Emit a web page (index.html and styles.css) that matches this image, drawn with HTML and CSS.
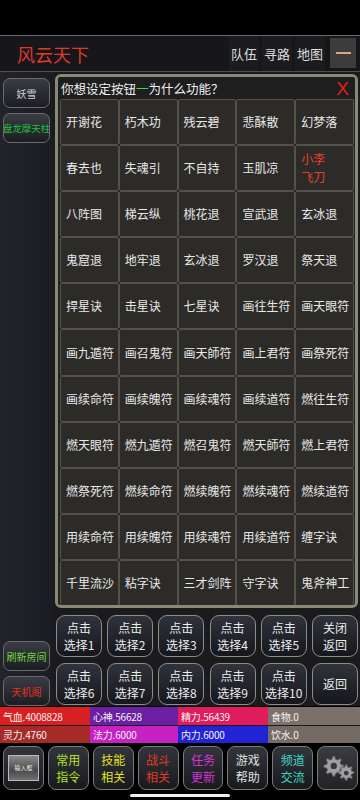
FILE: index.html
```html
<!DOCTYPE html>
<html lang="zh">
<head>
<meta charset="utf-8">
<link rel="stylesheet" href="styles.css">
</head>
<body>
<div class="phone">
  <div class="statusbar"></div>
  <header class="topbar">
    <div class="title">风云天下</div>
    <div class="top-actions">
      <span class="top-btn">队伍</span>
      <span class="top-btn">寻路</span>
      <span class="top-btn">地图</span>
      <span class="menu-btn"><span class="dash"></span></span>
    </div>
  </header>
  <div class="main">
    <aside class="side">
      <div class="side-group">
        <div class="side-btn">妖雪</div>
        <div class="side-btn green small">盘龙摩天柱</div>
      </div>
      <div class="side-group">
        <div class="side-btn lime">刷新房间</div>
        <div class="side-btn red">天机阁</div>
      </div>
    </aside>
    <section class="content">
      <div class="panel">
        <div class="panel-head">
          <span>你想设定按钮<span class="hl">一</span>为什么功能？</span>
          <span class="close">X</span>
        </div>
        <div class="grid">
          <div class="cell">开谢花</div><div class="cell">朽木功</div><div class="cell">残云碧</div><div class="cell">悲酥散</div><div class="cell">幻梦落</div>
          <div class="cell">春去也</div><div class="cell">失魂引</div><div class="cell">不自持</div><div class="cell">玉肌凉</div><div class="cell redtxt">小李<br>飞刀</div>
          <div class="cell">八阵图</div><div class="cell">梯云纵</div><div class="cell">桃花退</div><div class="cell">宣武退</div><div class="cell">玄冰退</div>
          <div class="cell">鬼窟退</div><div class="cell">地牢退</div><div class="cell">玄冰退</div><div class="cell">罗汉退</div><div class="cell">祭天退</div>
          <div class="cell">捍星诀</div><div class="cell">击星诀</div><div class="cell">七星诀</div><div class="cell">画往生符</div><div class="cell">画天眼符</div>
          <div class="cell">画九遁符</div><div class="cell">画召鬼符</div><div class="cell">画天師符</div><div class="cell">画上君符</div><div class="cell">画祭死符</div>
          <div class="cell">画续命符</div><div class="cell">画续魄符</div><div class="cell">画续魂符</div><div class="cell">画续道符</div><div class="cell">燃往生符</div>
          <div class="cell">燃天眼符</div><div class="cell">燃九遁符</div><div class="cell">燃召鬼符</div><div class="cell">燃天師符</div><div class="cell">燃上君符</div>
          <div class="cell">燃祭死符</div><div class="cell">燃续命符</div><div class="cell">燃续魄符</div><div class="cell">燃续魂符</div><div class="cell">燃续道符</div>
          <div class="cell">用续命符</div><div class="cell">用续魄符</div><div class="cell">用续魂符</div><div class="cell">用续道符</div><div class="cell">缠字诀</div>
          <div class="cell">千里流沙</div><div class="cell">粘字诀</div><div class="cell">三才剑阵</div><div class="cell">守字诀</div><div class="cell">鬼斧神工</div>
        </div>
      </div>
      <div class="choices">
        <div class="choice">点击<br>选择1</div>
        <div class="choice">点击<br>选择2</div>
        <div class="choice">点击<br>选择3</div>
        <div class="choice">点击<br>选择4</div>
        <div class="choice">点击<br>选择5</div>
        <div class="choice">关闭<br>返回</div>
        <div class="choice">点击<br>选择6</div>
        <div class="choice">点击<br>选择7</div>
        <div class="choice">点击<br>选择8</div>
        <div class="choice">点击<br>选择9</div>
        <div class="choice">点击<br>选择10</div>
        <div class="choice">返回</div>
      </div>
    </section>
  </div>
  <div class="stats">
    <div class="stat s-red">气血.4008828</div>
    <div class="stat s-purple">心神.56628</div>
    <div class="stat s-pink">精力.56439</div>
    <div class="stat s-grey">食物.0</div>
    <div class="stat s-dred">灵力.4760</div>
    <div class="stat s-mag">法力.6000</div>
    <div class="stat s-blue">内力.6000</div>
    <div class="stat s-grey2">饮水.0</div>
  </div>
  <nav class="nav">
    <div class="nav-btn input-btn"><span class="input-img">输入框</span></div>
    <div class="nav-btn c-lime">常用<br>指令</div>
    <div class="nav-btn c-yellow">技能<br>相关</div>
    <div class="nav-btn c-red">战斗<br>相关</div>
    <div class="nav-btn c-mag">任务<br>更新</div>
    <div class="nav-btn c-white">游戏<br>帮助</div>
    <div class="nav-btn c-cyan">频道<br>交流</div>
    <div class="nav-btn gear-btn">
      <svg width="38" height="38" viewBox="0 0 36 34">
        <g fill="#a0a0a0" stroke="#5a5a5a" stroke-width="0.8">
          <path d="M13 6 l2 0 l0.6 2.6 l2 0.9 l2.3 -1.4 l1.4 1.4 l-1.4 2.3 l0.9 2 l2.6 0.6 l0 2 l-2.6 0.6 l-0.9 2 l1.4 2.3 l-1.4 1.4 l-2.3 -1.4 l-2 0.9 l-0.6 2.6 l-2 0 l-0.6 -2.6 l-2 -0.9 l-2.3 1.4 l-1.4 -1.4 l1.4 -2.3 l-0.9 -2 l-2.6 -0.6 l0 -2 l2.6 -0.6 l0.9 -2 l-1.4 -2.3 l1.4 -1.4 l2.3 1.4 l2 -0.9 z"/>
          <path d="M25 14 l1.6 0 l0.5 2 l1.5 0.7 l1.8 -1.1 l1.1 1.1 l-1.1 1.8 l0.7 1.5 l2 0.5 l0 1.6 l-2 0.5 l-0.7 1.5 l1.1 1.8 l-1.1 1.1 l-1.800 -1.1 l-1.5 0.7 l-0.5 2 l-1.6 0 l-0.5 -2 l-1.5 -0.7 l-1.8 1.1 l-1.1 -1.1 l1.1 -1.8 l-0.7 -1.5 l-2 -0.5 l0 -1.6 l2 -0.5 l0.7 -1.5 l-1.1 -1.8 l1.1 -1.1 l1.8 1.1 l1.5 -0.7 z"/>
        </g>
        <circle cx="14" cy="15" r="3" fill="#3a3a3a"/>
        <circle cx="25.8" cy="21.8" r="2.3" fill="#3a3a3a"/>
      </svg>
    </div>
  </nav>
  <div class="home"><span class="home-bar"></span></div>
</div>
</body>
</html>
```

FILE: styles.css
```css
* { box-sizing: border-box; margin: 0; padding: 0; }
html, body { background: #000; }
body {
  width: 360px;
  height: 800px;
  overflow: hidden;
  font-family: "Noto Sans CJK SC", "Noto Sans", sans-serif;
  color: #e6e6e6;
}
.phone { width: 360px; height: 800px; display: flex; flex-direction: column; }
.statusbar { height: 35px; background: #000; }

.topbar {
  height: 37px;
  background: #17171b;
  border-top: 1px solid #6a6a6a;
  border-bottom: 1px solid #505050;
  display: flex;
  align-items: center;
  justify-content: space-between;
  padding-left: 17px;
}
.title { color: #de3a28; font-size: 18px; line-height: 1; }
.top-actions { display: flex; align-items: stretch; height: 100%; gap: 3px; padding-right: 4px; }
.top-btn {
  display: flex; align-items: center; justify-content: center;
  width: 30px; font-size: 13px; color: #dcdcdc;
  background: #1c1c20;
}
.menu-btn {
  width: 26px; margin-left: 2px; margin-top: 2px; margin-bottom: 3px;
  background: #3e3c3b;
  display: flex; align-items: center; justify-content: center;
}
.dash { display: block; width: 15px; height: 2px; background: #d9a48a; }

.main { height: 634px; display: flex; }
.side {
  width: 54px;
  background: linear-gradient(90deg, #22242a, #1b1c21);
  display: flex; flex-direction: column; justify-content: space-between;
  padding: 6px 3px 0 3px;
}
.side-group { display: flex; flex-direction: column; gap: 5px; }
.side-btn {
  height: 30px; width: 47px;
  border: 1px solid #6a6a70;
  border-radius: 7px;
  background: linear-gradient(#3a3c44, #1c1d22);
  display: flex; align-items: center; justify-content: center;
  font-size: 10px; color: #d0d0d0; white-space: nowrap; overflow: hidden;
}
.side-btn.green { color: #1dc23a; font-size: 9.5px; }
.side-btn.lime { color: #6fd83a; }
.side-btn.red { color: #e0301c; }

.content { flex: 1; display: flex; flex-direction: column; background: #1b1b1e; }
.panel {
  height: 534px;
  margin: 2px 2px 0 1px;
  border: 3px solid #8a8876;
  border-radius: 6px;
  background: #1c1b1a;
  overflow: hidden;
  display: flex; flex-direction: column;
}
.panel-head {
  height: 22px; flex: none;
  display: flex; align-items: center; justify-content: space-between;
  padding: 0 6px 0 3px;
  font-size: 12.5px; color: #f0f0f0; background: #1e1e1e;
}
.hl { color: #2ee04a; }
.close { color: #e0201c; font-size: 19px; font-family: "Liberation Sans", sans-serif; line-height: 1; }

.grid {
  display: grid;
  grid-template-columns: repeat(5, 1fr);
  grid-auto-rows: 46.1px;
  padding: 0 1px 0 2px;
  background: #262421;
}
.cell {
  background: #2d2b28;
  border: 1px solid #54504a;
  border-radius: 2px;
  display: flex; align-items: center;
  padding-left: 5px;
  font-size: 12px; line-height: 18px; color: #e8e8e8;
}
.cell.redtxt { color: #e6402c; }

.choices {
  flex: 1;
  display: grid;
  grid-template-columns: repeat(6, 46px);
  grid-auto-rows: 42px;
  column-gap: 5.2px; row-gap: 6px;
  padding: 7px 0 0 2px;
}
.choice {
  border: 1.5px solid #8c8c8c;
  border-radius: 9px;
  background: linear-gradient(#30333b, #15171c);
  display: flex; align-items: center; justify-content: center; text-align: center;
  font-size: 12px; line-height: 17.5px; color: #ececec;
}

.stats {
  display: grid;
  grid-template-columns: 90px 88px 90px 92px;
  grid-auto-rows: 18px;
  margin-top: 1px;
}
.stat { font-size: 10px; color: #f2f2f2; display: flex; align-items: center; padding-left: 3px; letter-spacing: -0.2px; }
.s-red { background: #d82020; }
.s-purple { background: #6b20a3; }
.s-pink { background: #e11b5c; }
.s-grey { background: #7c706a; }
.s-dred { background: #a52a28; border-top: 1px solid #1a1a1a; }
.s-mag { background: #c521c3; border-top: 1px solid #1a1a1a; }
.s-blue { background: #2323d6; border-top: 1px solid #1a1a1a; }
.s-grey2 { background: #756a64; border-top: 1px solid #1a1a1a; }

.nav {
  height: 47px;
  display: flex; gap: 4px;
  padding: 3px 2px 0 3px;
}
.nav-btn {
  width: 41px; height: 44px;
  border: 1.5px solid #7a7a7a;
  border-radius: 8px;
  background: linear-gradient(#32353c, #17191d);
  display: flex; align-items: center; justify-content: center; text-align: center;
  font-size: 12px; line-height: 17.5px;
}
.c-lime { color: #b6e21c; }
.c-yellow { color: #e2e41c; }
.c-red { color: #e23a22; }
.c-mag { color: #d633d6; }
.c-white { color: #e0e0e0; }
.c-cyan { color: #3fd6c4; }
.input-btn { padding: 4px; }
.input-img {
  width: 100%; height: 26px;
  background: linear-gradient(#8a8a8a, #4a4a4a 60%, #707070);
  border: 1px solid #bbb;
  font-size: 6px; line-height: 8px; color: #eee;
  display: flex; align-items: center; justify-content: center;
}
.gear-btn { background: linear-gradient(#3a3c42, #202226); }

.home { flex: 1; position: relative; }
.home-bar {
  position: absolute; left: 130px; top: 4px;
  width: 100px; height: 3px; border-radius: 2px; background: #f0f0f0;
}
```
